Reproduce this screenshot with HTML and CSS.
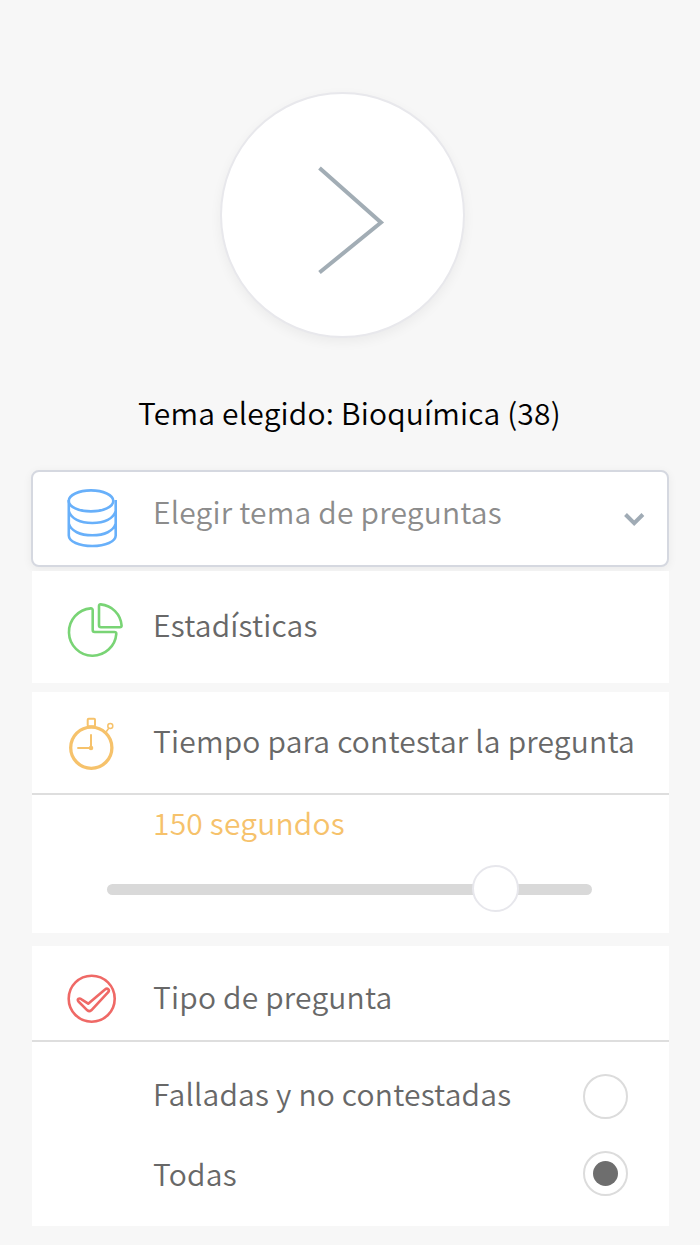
FILE: index.html
```html
<!DOCTYPE html>
<html lang="es">
<head>
<meta charset="utf-8">
<title>Preguntas</title>
<link rel="stylesheet" href="styles.css">
</head>
<body>
<main class="screen">
  <button class="start" aria-label="Empezar">
    <svg class="start-arrow" viewBox="0 0 72 112"><path d="M3.5 4L65 58.5L3.5 108.5"/></svg>
  </button>
  <h1 class="title">Tema elegido: Bioquímica (38)</h1>

  <div class="select row">
    <svg class="icon blue" viewBox="0 0 66 68"><ellipse cx="29" cy="16.900" rx="22.3" ry="10.5"/><path d="M6.800 16V51.5C6.800 57.500 17 62 30.300 62S53.700 57.500 53.700 51.500V16M6.800 27C9 34.500 18 39 30.300 39S51.500 34.500 53.700 27M6.800 39.500C9 47 18 51.300 30.300 51.300S51.500 47 53.700 39.500"/></svg>
    <span class="label">Elegir tema de preguntas</span>
    <svg class="chevron" viewBox="0 0 24 16"><path d="M3.500 3.500L12.200 12.200L20.900 3.500"/></svg>
  </div>

  <section class="card stats row">
    <svg class="icon green" viewBox="0 0 66 68"><path d="M30.700 14.300Q30.700 12.300 28.700 12.400A23.700 23.700 0 1 0 54.300 37.800Q54.400 36 52.400 36H32.700Q30.700 36 30.700 34Z"/><path d="M37 10Q37 8.300 38.700 8.400A23 23 0 0 1 59.600 29.600Q59.600 31.300 57.900 31.300H39Q37 31.300 37 29.300Z"/></svg>
    <span class="label">Estadísticas</span>
  </section>

  <section class="card time">
    <header class="row head">
      <svg class="icon orange" viewBox="0 0 66 68"><circle class="rim" cx="29.300" cy="35.700" r="20.600"/><rect x="25.700" y="6.700" width="7.300" height="7.500" rx="1"/><circle class="thin" cx="48.300" cy="14" r="2.500"/><path class="thin" d="M46.800 16.300L44.200 19.800"/><path d="M29 22.300V36H15.300"/><circle class="dot" cx="29" cy="36" r="1.300"/></svg>
      <span class="label">Tiempo para contestar la pregunta</span>
    </header>
    <div class="value">150 segundos</div>
    <div class="slider"><span class="thumb"></span></div>
  </section>

  <section class="card kind">
    <header class="row head">
      <svg class="icon red" viewBox="0 0 66 68"><circle cx="29.700" cy="30.700" r="23"/><path d="M19.500 31.300L26.200 35.700L43 21.500C45.500 19.500 48 21.800 46.200 24.200L29.300 42.300Q27.300 44 25.300 42.300L16.500 33.500C14.800 31.200 17 29.400 19.500 31.300Z"/></svg>
      <span class="label">Tipo de pregunta</span>
    </header>
    <div class="option">
      <span class="option-text">Falladas y no contestadas</span>
      <span class="radio"></span>
    </div>
    <div class="option last">
      <span class="option-text">Todas</span>
      <span class="radio checked"></span>
    </div>
  </section>
</main>
</body>
</html>
```
FILE: styles.css
```css
* { box-sizing: border-box; }
body {
  margin: 0;
  background: #f7f7f7;
  color: #686868;
  font: 350 30px/40px "Noto Sans CJK SC", "Noto Sans", sans-serif;
  letter-spacing: .19px;
}
.screen { height: 1245px; padding: 92px 31px 0 32px; overflow: hidden; }
svg { fill: none; flex: none; display: block; }
.start {
  display: flex;
  align-items: flex-start;
  width: 245px;
  height: 246px;
  margin: 0 0 0 188px;
  padding: 70px 0 0 94px;
  border: 2px solid #e8e8ec;
  border-radius: 50%;
  background: #fff;
  box-shadow: 0 4px 12px rgba(0, 0, 0, .05);
}
.start-arrow { width: 72px; height: 112px; stroke: #a2adb5; stroke-width: 4; }
.title {
  margin: 54px 0 0 106px;
  font: inherit;
  color: #000;
  white-space: nowrap;
}
.row { display: flex; align-items: flex-start; }
.label { margin-left: 25px; white-space: nowrap; }
.icon { width: 66px; height: 68px; margin-left: 30px; stroke-width: 2.6; stroke-linejoin: round; }
.blue { stroke: #68b0fa; }
.green { stroke: #79d475; }
.orange { stroke: #f6c26b; stroke-width: 2; }
.orange .rim { stroke-width: 3.3; }
.orange .thin { stroke-width: 1.5; }
.orange .dot { fill: #f6c26b; }
.red { stroke: #ef6966; }
.select {
  width: 638px;
  height: 97px;
  margin: 38px 0 0 -1px;
  padding-top: 12px;
  border: 2px solid #d5d8e0;
  border-radius: 8px;
  background: #fff;
  box-shadow: 0 2px 10px rgba(0, 0, 0, .06);
}
.select .icon { margin-left: 29px; }
.select .label { margin-top: 7px; color: #8c8c8c; }
.chevron { width: 24px; height: 16px; margin: 27px 21.5px 0 auto; stroke: #a0abb5; stroke-width: 4; }
.card { width: 636.5px; background: #fff; }
.stats { height: 112px; margin-top: 4px; padding-top: 25px; }
.stats .label { margin-top: 8px; }
.time { height: 241px; margin-top: 9px; }
.head { border-bottom: 2px solid #dedede; }
.time .head { height: 103px; padding-top: 20px; }
.time .label { margin-top: 8px; }
.value { margin: 7px 0 0 121px; color: #f6c26b; white-space: nowrap; }
.slider {
  display: flex;
  align-items: center;
  width: 485px;
  height: 11px;
  margin: 42px 0 0 74.5px;
  border-radius: 6px;
  background: #d9d9d9;
}
.thumb {
  flex: none;
  width: 47px;
  height: 47px;
  margin: 0 0 2px 365.5px;
  border: 2px solid #e7e7ec;
  border-radius: 50%;
  background: #fff;
}
.kind { height: 280px; margin-top: 13px; }
.kind .head { height: 95.5px; padding-top: 22px; }
.kind .label { margin-top: 8px; }
.option {
  display: flex;
  align-items: flex-start;
  justify-content: space-between;
  height: 45px;
  margin: 32.5px 41px 0 121px;
  white-space: nowrap;
}
.option.last { margin-top: 32px; }
.option-text { margin-top: -1px; }
.last .option-text { margin-top: 2px; }
.radio {
  display: grid;
  place-items: center;
  width: 45px;
  height: 45px;
  border: 2px solid #dcdcdc;
  border-radius: 50%;
}
.checked::after { content: ""; width: 25px; height: 25px; border-radius: 50%; background: #6e6e6e; }
```
